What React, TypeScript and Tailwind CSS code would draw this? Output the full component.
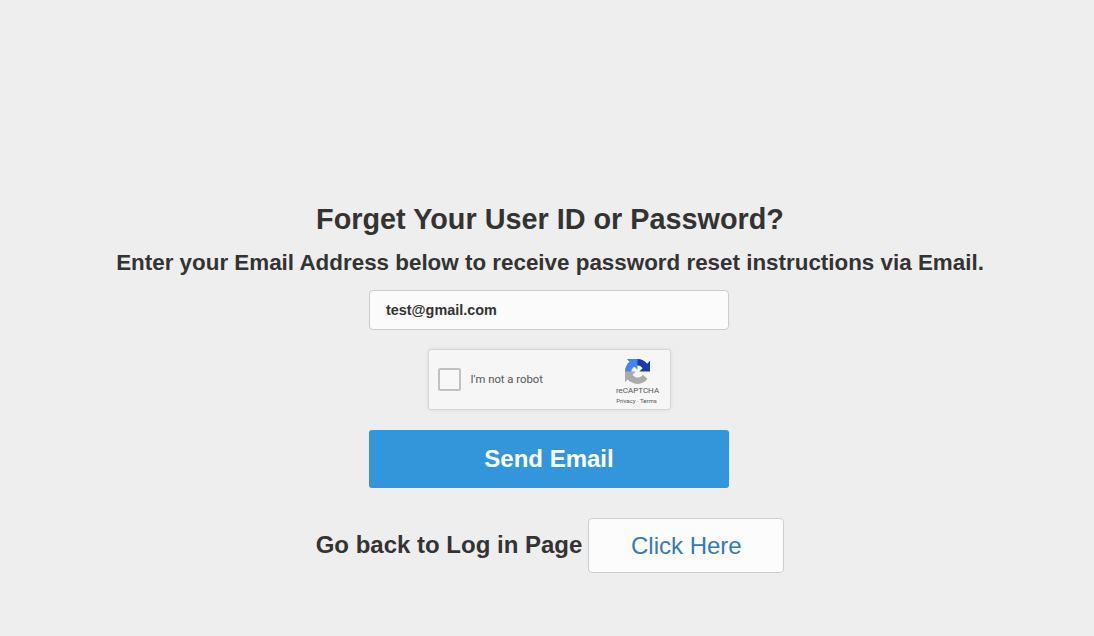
export default function App() {
  return (
    <div className="flex h-[636px] flex-col items-center overflow-hidden bg-[#eeeeee] pt-[202px] pl-[4px] font-['Liberation_Sans',Arial,sans-serif] text-[#333333]">
      <h1 className="ml-[2px] text-[28.8px] leading-[34px] font-bold">Forget Your User ID or Password?</h1>
      <p className="mt-[15px] ml-[2px] text-[22.4px] leading-[24px] font-bold">
        Enter your Email Address below to receive password reset instructions via Email.
      </p>
      <input
        readOnly
        value="test@gmail.com"
        className="mt-[15px] h-[40px] w-[360px] rounded border border-[#cccccc] bg-[#fbfbfb] px-[16px] text-[14.4px] font-bold text-[#333333] outline-none"
      />
      <div className="mt-[19px] flex h-[61px] w-[243px] items-center rounded-[3px] border border-[#d6d6d6] bg-[#f6f6f6] shadow-[0_0_4px_rgba(0,0,0,0.08)]">
        <div className="ml-[9px] h-[23px] w-[23px] rounded-[2px] border-2 border-[#c1c1c1] bg-[#f8f8f8]" />
        <span className="ml-[10px] flex-1 pt-[1px] font-['Roboto',sans-serif] text-[11.3px] text-[#555555]">I'm not a robot</span>
        <div className="mr-[9px] flex w-[46px] flex-col items-center pt-[5px]">
          <svg viewBox="0 0 64 64" className="h-[25px] w-[25px]">
            <path d="M64 31.955l-.033-1.37V4.687l-7.16 7.16C50.948 4.674 42.033.093 32.05.093c-10.4 0-19.622 4.96-25.458 12.64l11.736 11.86a15.55 15.55 0 0 1 4.754-5.334c2.05-1.6 4.952-2.906 8.968-2.906.485 0 .86.057 1.135.163 4.976.393 9.29 3.14 11.83 7.124l-8.307 8.307c10.523-.04 22.4-.066 27.295.005" fill="#1c3aa9" />
            <path d="M31.862.094l-1.37.033H4.594l7.16 7.16C4.58 13.147 0 22.06 0 32.046c0 10.4 4.96 19.622 12.64 25.458l11.86-11.736a15.55 15.55 0 0 1-5.334-4.754c-1.6-2.05-2.906-4.952-2.906-8.968 0-.485.057-.86.163-1.135.393-4.976 3.14-9.29 7.124-11.83l8.307 8.307c-.04-10.523-.066-22.4.005-27.295" fill="#4285f4" />
            <path d="M0 32.045l.033 1.37v25.898l7.16-7.16c5.86 7.173 14.774 11.754 24.76 11.754 10.4 0 19.622-4.96 25.458-12.64l-11.736-11.86a15.55 15.55 0 0 1-4.754 5.334c-2.05 1.6-4.952 2.906-8.968 2.906-.485 0-.86-.057-1.135-.163-4.976-.393-9.29-3.14-11.83-7.124l8.307-8.307c-10.523.04-22.4.066-27.295-.005" fill="#ababab" />
          </svg>
          <span className="mt-[2px] font-['Roboto',sans-serif] text-[8px] leading-[10px] text-[#555555]">reCAPTCHA</span>
          <span className="-ml-[2px] font-['Roboto',sans-serif] text-[6px] leading-[10px] whitespace-nowrap text-[#555555]">Privacy · Terms</span>
        </div>
      </div>
      <button className="mt-[20px] h-[58px] w-[360px] rounded-[3px] bg-[#3396da] text-[24px] font-bold text-white">
        Send Email
      </button>
      <div className="mt-[30px] ml-[2px] flex items-center gap-[6px]">
        <span className="-mt-[2px] text-[24px] font-bold">Go back to Log in Page</span>
        <a className="flex h-[55px] w-[196px] items-center justify-center rounded border border-[#cccccc] bg-[#fcfcfc] text-[24px] text-[#337ab7]">
          Click Here
        </a>
      </div>
    </div>
  )
}
